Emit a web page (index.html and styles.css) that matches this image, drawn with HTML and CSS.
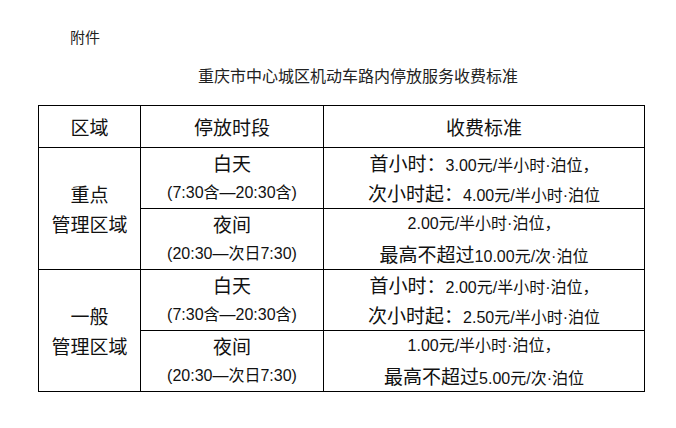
FILE: index.html
```html
<!DOCTYPE html>
<html lang="zh-CN">
<head>
<meta charset="utf-8">
<title>收费标准</title>
<link rel="stylesheet" href="styles.css">
</head>
<body>
<div class="page">
  <p class="note">附件</p>
  <h1 class="title">重庆市中心城区机动车路内停放服务收费标准</h1>
  <table class="fees">
    <colgroup><col class="c1"><col class="c2"><col class="c3"></colgroup>
    <thead>
      <tr><th>区域</th><th>停放时段</th><th>收费标准</th></tr>
    </thead>
    <tbody>
      <tr>
        <td rowspan="2" class="b"><div>重点</div><div>管理区域</div></td>
        <td><div class="b">白天</div><div>(7:30含—20:30含)</div></td>
        <td><div><span class="b">首小时：</span>3.00元/半小时·泊位，</div><div><span class="b">次小时起：</span>4.00元/半小时·泊位</div></td>
      </tr>
      <tr>
        <td><div class="b">夜间</div><div>(20:30—次日7:30)</div></td>
        <td><div>2.00元/半小时·泊位，</div><div><span class="b">最高不超过</span>10.00元/次·泊位</div></td>
      </tr>
      <tr>
        <td rowspan="2" class="b"><div>一般</div><div>管理区域</div></td>
        <td><div class="b">白天</div><div>(7:30含—20:30含)</div></td>
        <td><div><span class="b">首小时：</span>2.00元/半小时·泊位，</div><div><span class="b">次小时起：</span>2.50元/半小时·泊位</div></td>
      </tr>
      <tr>
        <td><div class="b">夜间</div><div>(20:30—次日7:30)</div></td>
        <td><div>1.00元/半小时·泊位，</div><div><span class="b">最高不超过</span>5.00元/次·泊位</div></td>
      </tr>
    </tbody>
  </table>
</div>
</body>
</html>
```
FILE: styles.css
```css
html, body {
  margin: 0;
  padding: 0;
  background: #ffffff;
}
body {
  font-family: "Noto Sans CJK SC", sans-serif;
  color: #111111;
}
.page {
  width: 676px;
  height: 428px;
  overflow: hidden;
}
.note {
  margin: 0;
  padding: 27px 0 0 70px;
  font-size: 15px;
  line-height: 20px;
  font-weight: normal;
  color: #222222;
}
.title {
  margin: 17px 0 0 0;
  padding-left: 198px;
  font-size: 16px;
  line-height: 22px;
  font-weight: normal;
  color: #222222;
}
.fees {
  margin: 19px 0 0 38px;
  border-collapse: collapse;
  table-layout: fixed;
  width: 606px;
}
.c1 { width: 102px; }
.c2 { width: 183px; }
.c3 { width: 321px; }
.fees th,
.fees td {
  border: 1px solid #000000;
  padding: 0;
  text-align: center;
  vertical-align: middle;
}
.fees th {
  height: 41px;
  font-family: "Noto Sans CJK SC", sans-serif;
  font-size: 19px;
  font-weight: normal;
  line-height: 30px;
}
.fees td {
  font-family: "Liberation Sans", "Noto Sans CJK SC", sans-serif;
  font-size: 16px;
  line-height: 30px;
  white-space: nowrap;
}
.fees td div {
  height: 30px;
}
.fees .b {
  font-family: "Noto Sans CJK SC", sans-serif;
  font-size: 19px;
}
```
